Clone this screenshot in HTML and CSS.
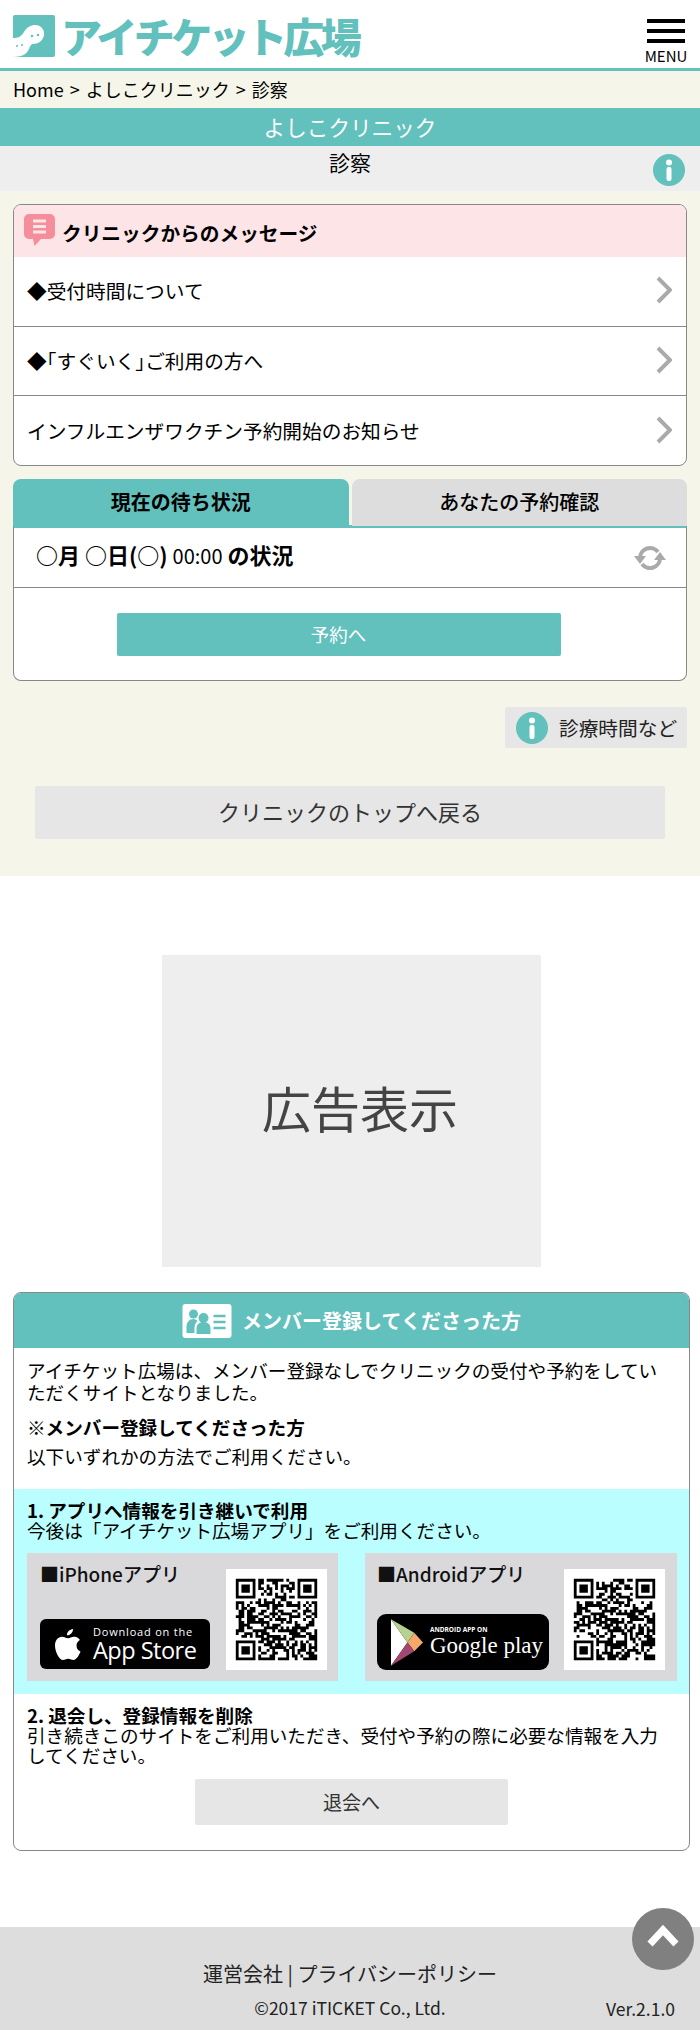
FILE: index.html
```html
<!DOCTYPE html>
<html lang="ja">
<head>
  <meta charset="UTF-8">
  <title>アイチケット広場</title>
  <link rel="stylesheet" href="styles.css">
</head>
<body>

  <header class="site-head">
    <a class="logo">
      <svg class="logo-mark" viewBox="0 0 42 42">
        <rect width="42" height="42" rx="2" fill="#62c0bd"/>
        <path d="M0 23c5 0 8-1 11-6 3-5 7-7 11-7 6 0 10 5 9 10-1 6-6 9-11 9-2 0-3 2-4 5-2 4-5 8-16 8z" fill="#fff"/>
        <circle cx="19" cy="21" r="1.3" fill="#62c0bd"/>
        <circle cx="25" cy="20" r="1.3" fill="#62c0bd"/>
        <circle cx="4" cy="31" r="1" fill="#62c0bd"/>
        <circle cx="9" cy="30" r="1" fill="#62c0bd"/>
      </svg>
      <span class="logo-text">アイチケット広場</span>
    </a>
    <div class="menu">
      <span class="menu-bar"></span>
      <span class="menu-bar"></span>
      <span class="menu-bar"></span>
      <span class="menu-label">MENU</span>
    </div>
  </header>

  <main class="clinic">
    <div class="crumbs">Home &gt; よしこクリニック &gt; 診察</div>
    <div class="clinic-name">よしこクリニック</div>
    <div class="page-title">
      <span>診察</span>
      <svg class="info info-title" viewBox="0 0 32 32"><use href="#i-info"/></svg>
    </div>

    <section class="box messages">
      <h2 class="messages-head">
        <svg class="msg-icon" viewBox="0 0 31 32">
          <path d="M5 0h21a5 5 0 0 1 5 5v15a5 5 0 0 1-5 5H17l-6.500 7-1.500-7H5a5 5 0 0 1-5-5V5a5 5 0 0 1 5-5z" fill="#f58e9b"/>
          <path d="M9 7h13M9 12.500h13M9 18h13" stroke="#fde4e7" stroke-width="3"/>
        </svg>
        <span class="messages-title">クリニックからのメッセージ</span>
      </h2>
      <a class="msg-row">◆受付時間について<svg class="chev" viewBox="0 0 16 28"><use href="#i-chev"/></svg></a>
      <a class="msg-row"><span>◆<span class="bracket">「</span>すぐいく<span class="bracket">」</span>ご利用の方へ</span><svg class="chev" viewBox="0 0 16 28"><use href="#i-chev"/></svg></a>
      <a class="msg-row">インフルエンザワクチン予約開始のお知らせ<svg class="chev" viewBox="0 0 16 28"><use href="#i-chev"/></svg></a>
    </section>

    <div class="tabs">
      <div class="tab tab-on">現在の待ち状況</div>
      <div class="tab">あなたの予約確認</div>
    </div>
    <section class="box status">
      <div class="status-row">
        <span class="status-text"><b>○月 ○日(○)</b> <span class="status-time">00:00</span> <b>の状況</b></span>
        <svg class="reload" viewBox="0 0 32 26">
          <path d="M6 13a10 10 0 0 1 18-6M26 13a10 10 0 0 1-18 6" fill="none" stroke="#aaa" stroke-width="4"/>
          <path d="M0 11h12l-6 8zM20 15h12l-6-8z" fill="#aaa"/>
        </svg>
      </div>
      <div class="status-foot">
        <a class="btn-reserve">予約へ</a>
      </div>
    </section>

    <div class="hours-wrap">
      <a class="hours">
        <svg class="info" viewBox="0 0 32 32"><use href="#i-info"/></svg>
        診療時間など
      </a>
    </div>

    <a class="btn-grey btn-back">クリニックのトップへ戻る</a>
  </main>

  <div class="ad">広告表示</div>

  <section class="box member">
    <h2 class="member-head">
      <svg class="member-icon" viewBox="0 0 49 34">
        <rect width="49" height="34" rx="3" fill="#fff"/>
        <circle cx="11" cy="10" r="4.500" fill="#62c0bd"/>
        <path d="M4 29v-6c0-5 3-8 7-8 2 0 3 1 4 2-2 2-3 4-3 7v5z" fill="#62c0bd"/>
        <circle cx="21" cy="14" r="5" fill="#62c0bd"/>
        <path d="M14 30v-5c0-5 3-7 7-7s7 2 7 7v5z" fill="#62c0bd"/>
        <path d="M31 12h12M31 18h12M31 24h12" stroke="#62c0bd" stroke-width="2.500"/>
      </svg>
      メンバー登録してくださった方
    </h2>
    <div class="member-intro">
      <p class="intro-lead">アイチケット広場は、メンバー登録なしでクリニックの受付や予約をしていただくサイトとなりました。</p>
      <p class="intro-note">※<b>メンバー登録してくださった方</b></p>
      <p>以下いずれかの方法でご利用ください。</p>
    </div>
    <div class="app-band">
      <p class="step"><b>1. アプリへ情報を引き継いで利用</b><br>今後は「アイチケット広場アプリ」をご利用ください。</p>
      <div class="apps">
        <div class="app">
          <div class="app-left">
            <div class="app-name">■iPhoneアプリ</div>
            <div class="badge badge-apple">
              <svg class="apple" viewBox="0 0 26 31">
                <path d="M18 0c.2 3-2.600 6.500-6 6.300C11.700 3 14.700.300 18 0zM21.500 16.500c0-3 2-4.500 3.500-5.500-2-2.700-4.600-3.200-6-3.200-2.600 0-4 1.500-6 1.500s-3.500-1.500-6-1.500C3 7.800 0 11.500 0 16.500 0 23 4.500 31 8 31c2 0 2.800-1.300 5.200-1.300S16.500 31 18.500 31c3 0 6-5.500 7-8.500-2.500-1-4-3-4-6z" fill="#fff"/>
              </svg>
              <div class="badge-text">
                <span class="apple-small">Download on the</span>
                <span class="apple-big">App Store</span>
              </div>
            </div>
          </div>
          <svg class="qr" data-seed="7" viewBox="0 0 100 100"></svg>
        </div>
        <div class="app">
          <div class="app-left">
            <div class="app-name">■Androidアプリ</div>
            <div class="badge badge-google">
              <svg class="play" viewBox="0 0 34 50">
                <path d="M1 1l17 24L1 49z" fill="#fff"/>
                <path d="M1 1l24 14-7 10z" fill="#b5d38f"/>
                <path d="M25 15l9 10-9 9-7-9z" fill="#f4a86b"/>
                <path d="M1 49l17-24 7 9z" fill="#a2476f"/>
              </svg>
              <div class="badge-text">
                <span class="google-small">ANDROID APP ON</span>
                <span class="google-big">Google play</span>
              </div>
            </div>
          </div>
          <svg class="qr" data-seed="23" viewBox="0 0 100 100"></svg>
        </div>
      </div>
    </div>
    <div class="leave">
      <p class="step"><b>2. 退会し、登録情報を削除</b><br>引き続きこのサイトをご利用いただき、受付や予約の際に必要な情報を入力してください。</p>
      <a class="btn-grey btn-leave">退会へ</a>
    </div>
  </section>

  <footer class="site-foot">
    <div class="foot-links">運営会社 | プライバシーポリシー</div>
    <div class="foot-copy">©2017 iTICKET Co., Ltd.</div>
    <div class="foot-ver">Ver.2.1.0</div>
    <a class="to-top">
      <svg viewBox="0 0 32 24"><path d="M3 20L16 6l13 14" fill="none" stroke="#fff" stroke-width="7"/></svg>
    </a>
  </footer>

  <svg class="defs" aria-hidden="true">
    <symbol id="i-info" viewBox="0 0 32 32">
      <circle cx="16" cy="16" r="16" fill="#62c0bd"/>
      <circle cx="16" cy="8.500" r="3" fill="#fff"/>
      <rect x="13.500" y="13" width="5" height="14" rx="2" fill="#fff"/>
    </symbol>
    <symbol id="i-chev" viewBox="0 0 16 28">
      <path d="M2 2l12 12L2 26" fill="none" stroke="#aaa" stroke-width="4"/>
    </symbol>
  </svg>

  <script src="qr.js"></script>
</body>
</html>
```

FILE: styles.css
```css
* { box-sizing: border-box; }
body {
  margin: 0;
  background: #fff;
  color: #000;
  font-family: "Noto Sans CJK JP", "Noto Sans", sans-serif;
  font-size: 18.6px;
  line-height: 22px;
}
p, h2 { margin: 0; }
.defs { display: none; }

.site-head {
  height: 71px;
  border-bottom: 3px solid #62c0bd;
  display: flex;
  justify-content: space-between;
  padding: 15px 13px 0;
}
.logo { display: flex; align-items: flex-start; }
.logo-mark { width: 42px; height: 42px; }
.logo-text {
  color: #62c0bd;
  font-size: 41px;
  font-weight: 900;
  line-height: 40px;
  letter-spacing: -3.600px;
  margin-left: 6px;
}
.menu { width: 42px; display: flex; flex-direction: column; align-items: center; margin-top: 4px; }
.menu-bar { width: 38px; height: 4px; background: #000; margin-bottom: 6px; }
.menu-label { font-size: 15px; line-height: 18px; margin-top: -2px; }

.clinic { background: #f5f5e9; height: 805px; }
.crumbs { height: 37px; padding: 0 13px; font-size: 18px; line-height: 36px; word-spacing: 2px; }
.clinic-name {
  height: 38px;
  background: #62c0bd;
  color: #fff;
  font-size: 21.600px;
  line-height: 38px;
  text-align: center;
}
.page-title {
  height: 45px;
  background: #eee;
  position: relative;
  text-align: center;
  font-size: 21px;
  line-height: 32px;
}
.info { width: 32px; height: 32px; flex: none; }
.info-title { position: absolute; right: 15px; top: 8px; }

.box {
  background: #fff;
  border: 1px solid #888;
  border-radius: 8px;
  margin: 0 13px;
  overflow: hidden;
}
.messages { margin-top: 13px; height: 262px; }
.messages-head {
  height: 52px;
  background: #fde4e7;
  display: flex;
  align-items: center;
  gap: 7px;
  padding: 0 0 0 10px;
  font-size: 19.700px;
  font-weight: 700;
}
.messages-title { margin-top: 4px; }
.msg-icon { width: 31px; height: 32px; margin-bottom: 3px; }
.msg-row {
  height: 69.500px;
  display: flex;
  align-items: center;
  justify-content: space-between;
  padding: 0 14px 0 13px;
  font-size: 19.700px;
  border-bottom: 1px solid #888;
}
.msg-row:last-child { border-bottom: 0; }
.bracket { font-feature-settings: "halt"; }
.chev { width: 16px; height: 28px; margin-bottom: 2px; }

.tabs { display: flex; gap: 3px; margin: 13px 13px 0; height: 47px; }
.tab {
  flex: 1;
  background: #ddd;
  border-radius: 8px 8px 0 0;
  text-align: center;
  font-size: 20px;
  line-height: 46px;
  font-weight: 500;
}
.tab-on { background: #62c0bd; font-weight: 700; }
.status {
  height: 156px;
  border-top: 3px solid #62c0bd;
  border-radius: 0 0 8px 8px;
  margin-top: -1px;
}
.status-row {
  height: 60px;
  display: flex;
  align-items: center;
  justify-content: space-between;
  padding: 0 20px 0 22px;
  border-bottom: 1px solid #888;
  font-size: 22px;
}
.status-text { display: block; margin-bottom: 5px; }
.status-time { font-size: 20px; }
.reload { width: 32px; height: 26px; }
.status-foot { padding: 25px 23px 0 0; display: flex; justify-content: center; }
.btn-reserve {
  width: 444px;
  height: 43px;
  background: #62c0bd;
  color: #fff;
  border-radius: 2px;
  text-align: center;
  font-size: 18.500px;
  line-height: 43px;
}

.hours-wrap { display: flex; justify-content: flex-end; margin: 26px 13px 0; }
.hours {
  width: 182px;
  height: 41px;
  background: #e6e6e6;
  border-radius: 2px;
  display: flex;
  align-items: center;
  gap: 11px;
  padding-left: 11px;
  font-size: 19.700px;
  color: #222;
}
.btn-grey {
  display: block;
  background: #e6e6e6;
  border-radius: 2px;
  text-align: center;
  color: #333;
}
.btn-back {
  margin: 38px 35px 0;
  height: 53px;
  line-height: 51px;
  font-size: 22px;
}

.ad {
  width: 379px;
  height: 312px;
  margin: 79px auto 0;
  transform: translateX(1px);
  background: #eee;
  color: #444;
  display: flex;
  align-items: center;
  justify-content: center;
  padding: 0 0 8px 18px;
  font-size: 49px;
}

.member { margin: 25px 10px 0 13px; height: 559px; }
.member-head {
  height: 55px;
  background: #62c0bd;
  color: #fff;
  display: flex;
  align-items: center;
  justify-content: center;
  gap: 10px;
  font-size: 20px;
  font-weight: 700;
}
.member-icon { width: 50px; height: 34px; }
.member-intro { padding: 11px 24px 0 13px; height: 141px; }
.intro-note { margin-top: 13px; }
.intro-note + p { margin-top: 7px; }
.app-band { background: #bbfeff; height: 205px; padding-top: 11px; }
.step { padding: 0 13px; line-height: 20px; }
.apps { display: flex; gap: 27px; padding: 13px 0 0 13px; }
.app {
  width: 311px;
  height: 128px;
  background: #d9d9dc;
  display: flex;
  justify-content: space-between;
  padding: 11px 11px 0 13px;
}
.app + .app { width: 312px; padding-right: 12px; }
.app-name { font-size: 19px; font-weight: 500; line-height: 20px; color: #111; }
.badge {
  background: #000;
  border-radius: 6px;
  color: #fff;
  display: flex;
  align-items: center;
}
.badge-apple { width: 170px; height: 50px; margin-top: 35px; padding-left: 15px; gap: 12px; }
.app + .app .app-left { margin-left: -1px; }
.badge-google { width: 172px; height: 56px; margin-top: 30px; padding-left: 13px; gap: 7px; border-radius: 9px; }
.apple { width: 26px; height: 31px; }
.play { width: 33px; height: 49px; }
.badge-text { display: flex; flex-direction: column; white-space: nowrap; }
.apple-small { font: 11px/12px "Open Sans", sans-serif; letter-spacing: 0.800px; }
.apple-big { font: 500 23.500px/25px "Open Sans", sans-serif; letter-spacing: -0.500px; }
.google-small { font: 700 6.500px/8px "Open Sans", sans-serif; }
.google-big { font: 23px/24px "Liberation Serif", serif; }
.qr { width: 101px; height: 101px; background: #fff; flex: none; margin-top: 5px; }

.leave { padding-top: 11px; position: relative; }
.btn-leave {
  width: 313px;
  height: 46px;
  line-height: 46px;
  margin: 14px 0 0 181px;
  font-size: 19px;
}

.site-foot {
  margin-top: 76px;
  height: 103px;
  background: #ddd;
  position: relative;
}
.foot-links {
  position: absolute;
  top: 35px;
  left: 0;
  right: 0;
  text-align: center;
  font-size: 20px;
  line-height: 24px;
  color: #222;
}
.foot-copy {
  position: absolute;
  top: 70px;
  left: 0;
  right: 0;
  text-align: center;
  font-size: 17.500px;
  line-height: 22px;
  color: #222;
}
.foot-ver {
  position: absolute;
  top: 71px;
  right: 25px;
  font-size: 17.500px;
  color: #222;
}
.to-top {
  position: absolute;
  right: 6px;
  top: -19px;
  width: 62px;
  height: 62px;
  border-radius: 50%;
  background: #808080;
  display: flex;
  align-items: center;
  justify-content: center;
}
.to-top svg { width: 32px; height: 24px; margin-bottom: 6px; }
```

FILE: qr.js
```js
// draws the two QR squares: three finder marks and a seeded dot pattern
var SIZE = 29;
var qrs = document.querySelectorAll(".qr");

function inFinder(x, y) {
  return (x < 8 && y < 8) || (x >= SIZE - 8 && y < 8) || (x < 8 && y >= SIZE - 8);
}

function finder(x, y) {
  var s = "M" + x + " " + y + "h7v7h-7zM" + (x + 1) + " " + (y + 1) + "v5h5v-5z";
  return s + "M" + (x + 2) + " " + (y + 2) + "h3v3h-3z";
}

qrs.forEach(function (svg) {
  var seed = Number(svg.dataset.seed);
  var d = finder(0, 0) + finder(SIZE - 7, 0) + finder(0, SIZE - 7);
  for (var y = 0; y < SIZE; y++) {
    for (var x = 0; x < SIZE; x++) {
      seed = (seed * 1103 + 12345) % 65536;
      if (!inFinder(x, y) && seed % 100 > 45) {
        d += "M" + x + " " + y + "h1v1h-1z";
      }
    }
  }
  svg.setAttribute("viewBox", "-3.500 -3.500 36 36");
  svg.innerHTML = '<path fill-rule="evenodd" d="' + d + '"/>';
});
```
